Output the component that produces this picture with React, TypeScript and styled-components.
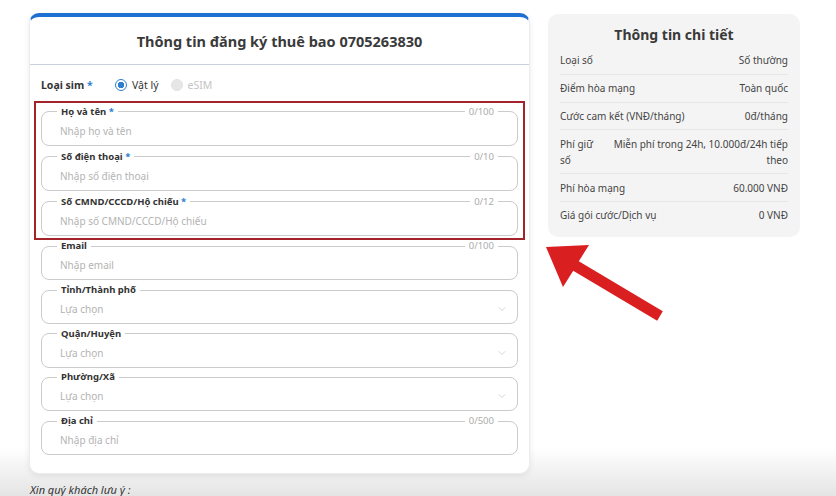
import React from "react";
import styled, { createGlobalStyle } from "styled-components";
import { ChevronDown } from "lucide-react";

const GlobalStyle = createGlobalStyle`
  html, body {
    margin: 0;
    padding: 0;
  }
  body {
    font-family: "Noto Sans", "Open Sans", sans-serif;
    color: #333;
    min-height: 496px;
    background: linear-gradient(to bottom, #ffffff 0, #ffffff 448px, #e4e4e4 496px);
    overflow: hidden;
  }
`;

type FieldDef = {
  label: string;
  placeholder: string;
  required?: boolean;
  counter?: string;
  select?: boolean;
};

const requiredFields: FieldDef[] = [
  { label: "Họ và tên", placeholder: "Nhập họ và tên", required: true, counter: "0/100" },
  { label: "Số điện thoại", placeholder: "Nhập số điện thoại", required: true, counter: "0/10" },
  {
    label: "Số CMND/CCCD/Hộ chiếu",
    placeholder: "Nhập số CMND/CCCD/Hộ chiếu",
    required: true,
    counter: "0/12",
  },
];

const otherFields: FieldDef[] = [
  { label: "Email", placeholder: "Nhập email", counter: "0/100" },
  { label: "Tỉnh/Thành phố", placeholder: "Lựa chọn", select: true },
  { label: "Quận/Huyện", placeholder: "Lựa chọn", select: true },
  { label: "Phường/Xã", placeholder: "Lựa chọn", select: true },
  { label: "Địa chỉ", placeholder: "Nhập địa chỉ", counter: "0/500" },
];

const details = [
  { label: "Loại số", value: "Số thường" },
  { label: "Điểm hòa mạng", value: "Toàn quốc" },
  { label: "Cước cam kết (VNĐ/tháng)", value: "0đ/tháng" },
  { label: "Phí giữ số", value: "Miễn phí trong 24h, 10.000đ/24h tiếp theo" },
  { label: "Phí hòa mạng", value: "60.000 VNĐ" },
  { label: "Giá gói cước/Dịch vụ", value: "0 VNĐ" },
];

function Field({ field }: { field: FieldDef }) {
  return (
    <FieldWrap>
      <FieldSet>
        <Legend>
          {field.label}
          {field.required && <Star> *</Star>}
        </Legend>
        <InputRow>
          <Placeholder>{field.placeholder}</Placeholder>
          {field.select && <ChevronDown size={12} strokeWidth={1.2} color="#b9b9b9" />}
        </InputRow>
      </FieldSet>
      {field.counter && <Counter>{field.counter}</Counter>}
    </FieldWrap>
  );
}

export default function App() {
  return (
    <>
      <GlobalStyle />
      <Page>
        <Columns>
          <FormCard>
            <CardHeader>Thông tin đăng ký thuê bao 0705263830</CardHeader>
            <CardBody>
              <SimRow>
                <SimLabel>
                  Loại sim<Star> *</Star>
                </SimLabel>
                <RadioOption>
                  <Radio $checked />
                  Vật lý
                </RadioOption>
                <RadioOption $disabled>
                  <Radio $disabled />
                  eSIM
                </RadioOption>
              </SimRow>
              <Highlight>
                {requiredFields.map((f) => (
                  <Field key={f.label} field={f} />
                ))}
              </Highlight>
              {otherFields.map((f) => (
                <Field key={f.label} field={f} />
              ))}
            </CardBody>
          </FormCard>

          <DetailCard>
            <DetailTitle>Thông tin chi tiết</DetailTitle>
            {details.map((d) => (
              <DetailRow key={d.label}>
                <DetailLabel>{d.label}</DetailLabel>
                <DetailValue>{d.value}</DetailValue>
              </DetailRow>
            ))}
          </DetailCard>
        </Columns>
        <Note>Xin quý khách lưu ý :</Note>

        <Arrow width="140" height="90" viewBox="0 0 140 90">
          <polygon
            points="6,7 49,5 38.8,21.3 122.8,71.3 117.2,80.7 33.2,30.7 23,47"
            fill="#d91f1f"
          />
        </Arrow>
      </Page>
    </>
  );
}

const Page = styled.div`
  position: relative;
  padding: 13px 0 0 29px;
  height: 483px;
`;

const Columns = styled.div`
  display: flex;
  align-items: flex-start;
  gap: 18px;
`;

const FormCard = styled.div`
  width: 501px;
  box-sizing: border-box;
  background: #fff;
  border: 1px solid #ececec;
  border-top: 4px solid #1d6fd2;
  border-radius: 10px;
  box-shadow: 0 2px 6px rgba(0, 0, 0, 0.08);
`;

const CardHeader = styled.div`
  height: 47px;
  display: flex;
  align-items: center;
  justify-content: center;
  font-size: 14.5px;
  font-weight: 700;
  color: #3a3a3a;
  border-bottom: 1.5px solid #c9d3de;
`;

const CardBody = styled.div`
  padding: 10px 11px 18px 11px;
  display: flex;
  flex-direction: column;
  gap: 3.7px;
`;

const SimRow = styled.div`
  display: flex;
  align-items: center;
  height: 20px;
  margin-bottom: 1px;
`;

const SimLabel = styled.span`
  font-size: 10.5px;
  font-weight: 700;
  color: #333;
  width: 74px;
`;

const Star = styled.span`
  color: #2f7fd1;
`;

const RadioOption = styled.label<{ $disabled?: boolean }>`
  display: flex;
  align-items: center;
  gap: 5px;
  font-size: 10.5px;
  color: ${({ $disabled }) => ($disabled ? "#c4c4c4" : "#333")};
  margin-right: 12px;
`;

const Radio = styled.span<{ $checked?: boolean; $disabled?: boolean }>`
  width: 10px;
  height: 10px;
  border-radius: 50%;
  border: 1.5px solid ${({ $disabled }) => ($disabled ? "#e2e2e2" : "#2f7fd1")};
  background: ${({ $checked, $disabled }) =>
    $disabled ? "#e6e6e6" : $checked ? "radial-gradient(circle, #2f7fd1 0 3px, #fff 3.5px)" : "#fff"};
`;

const Highlight = styled.div`
  display: flex;
  flex-direction: column;
  gap: 5px;
  margin: 1px -7px -3.5px;
  padding: 3px 5px 2.5px 5px;
  border: 2px solid #a3232a;
`;

const FieldWrap = styled.div`
  position: relative;
`;

const FieldSet = styled.fieldset`
  margin: 0;
  padding: 0 9px 0 14px;
  border: 1px solid #cbcbcb;
  border-radius: 8px;
  min-width: 0;
`;

const Legend = styled.legend`
  padding: 0 4px;
  margin-left: 1px;
  font-size: 9.5px;
  font-weight: 700;
  line-height: 12px;
  color: #333;
`;

const InputRow = styled.div`
  height: 27px;
  display: flex;
  align-items: center;
  justify-content: space-between;
  padding: 0 0 1px 4px;
  box-sizing: border-box;
`;

const Placeholder = styled.span`
  font-size: 10px;
  color: #b3b3b3;
`;

const Counter = styled.span`
  position: absolute;
  top: 0;
  right: 20px;
  padding: 0 4px;
  background: #fff;
  font-size: 9.5px;
  line-height: 12px;
  color: #ababab;
`;

const DetailCard = styled.div`
  width: 252px;
  box-sizing: border-box;
  margin-top: 1px;
  padding: 10px 12px 8px;
  background: #f4f4f4;
  border-radius: 10px;
`;

const DetailTitle = styled.div`
  text-align: center;
  font-size: 14px;
  font-weight: 700;
  line-height: 22px;
  color: #3a3a3a;
  margin-bottom: 1px;
`;

const DetailRow = styled.div`
  display: flex;
  justify-content: space-between;
  gap: 12px;
  padding: 5.4px 0;
  font-size: 10px;
  line-height: 16px;
  color: #444;
  border-bottom: 1px solid #e6e6e6;

  &:last-child {
    border-bottom: none;
  }
`;

const DetailLabel = styled.span`
  flex: 0 3 auto;
`;

const DetailValue = styled.span`
  flex: 0 1 auto;
  text-align: right;
`;

const Note = styled.div`
  margin-top: 8px;
  margin-left: 1px;
  font-size: 11px;
  font-style: italic;
  color: #333;
`;

const Arrow = styled.svg`
  position: absolute;
  left: 540px;
  top: 240px;
`;
